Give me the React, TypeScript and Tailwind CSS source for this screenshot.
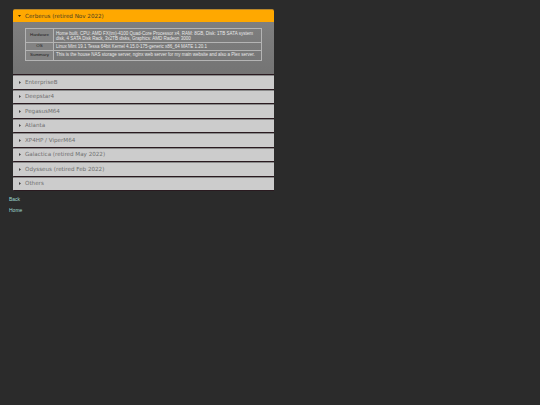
const items = ["EnterpriseB","Deepstar4","PegasusM64","Atlanta","XP4HP / ViperM64","Galactica (retired May 2022)","Odysseus (retired Feb 2022)","Others"];
const rows = [
  ["Hardware", "Home built, CPU: AMD FX(tm)-4100 Quad-Core Processor x4, RAM: 8GB, Disk: 1TB SATA system\ndisk, 4 SATA Disk Rack, 3x2TB disks, Graphics: AMD Radeon 3000"],
  ["OS", "Linux Mint 19.1 Tessa 64bit Kernel 4.15.0-175-generic x86_64 MATE 1.20.1"],
  ["Summary", "This is the house NAS storage server, nginx web server for my main website and also a Plex server."],
];
export default function App() {
  return (
    <div className="w-[540px] h-[405px] bg-[#2b2b2b] pt-[9px] pl-[13px] font-['Liberation_Sans',sans-serif]">
      <div className="w-[261px] flex flex-col">
        <div className="h-[13px] bg-[#ffa800] rounded-t-[2px] flex items-center pl-[5px] border-t border-[#b8862a]">
          <svg width="3" height="2" viewBox="0 0 3 2" className="mr-[4px]"><path d="M0 0H3L1.5 2Z" fill="#3a2a00" /></svg>
          <span className="text-[5.6px] leading-none text-[#4a4020] font-['DejaVu_Sans',sans-serif] pt-[1px]">Cerberus (retired Nov 2022)</span>
        </div>
        <div className="h-[53px] bg-gradient-to-b from-[#7f7f7f] to-[#747474] pt-[6px] px-[12px] border-b border-[#2a1a20]">
          <div className="w-[237px] border border-[#b4b4b4] flex flex-col">
            {rows.map(([k, v], i) => (
              <div key={k} className={`flex ${i ? "border-t border-[#b4b4b4]" : ""}`}>
                <div className={`w-[28px] shrink-0 bg-[#838383] border-r border-[#b4b4b4] flex items-center justify-center text-[4.4px] leading-none text-[#222] ${i === 0 ? "h-[13px]" : i === 1 ? "h-[7px]" : "h-[9px]"}`}>{k}</div>
                <div className={`flex-1 pl-[2px] text-[4.5px] text-[#e8e8e8] whitespace-pre-line ${i === 0 ? "leading-[5px] pt-[1.5px]" : "leading-[7px]"}`}>
                  {v}
                </div>
              </div>
            ))}
          </div>
        </div>
        {items.map((t) => (
          <div key={t} className="h-[14.5px] bg-[#cccccc] rounded-l-[1px] flex items-center pl-[6px] border-b-[1.5px] border-[#2a1a20] border-t border-t-[#8a8a8a]">
            <svg width="2" height="3" viewBox="0 0 2 3" className="mr-[4px]"><path d="M0 0V3L2 1.5Z" fill="#444" /></svg>
            <span className="text-[5.6px] leading-none text-[#707070] font-['DejaVu_Sans',sans-serif] pt-[1px]">{t}</span>
          </div>
        ))}
        <a className="mt-[6px] ml-[-4px] text-[5px] leading-none text-[#9fd8d0]">Back</a>
        <a className="mt-[6px] ml-[-4px] text-[5px] leading-none text-[#9fd8d0]">Home</a>
      </div>
    </div>
  );
}
